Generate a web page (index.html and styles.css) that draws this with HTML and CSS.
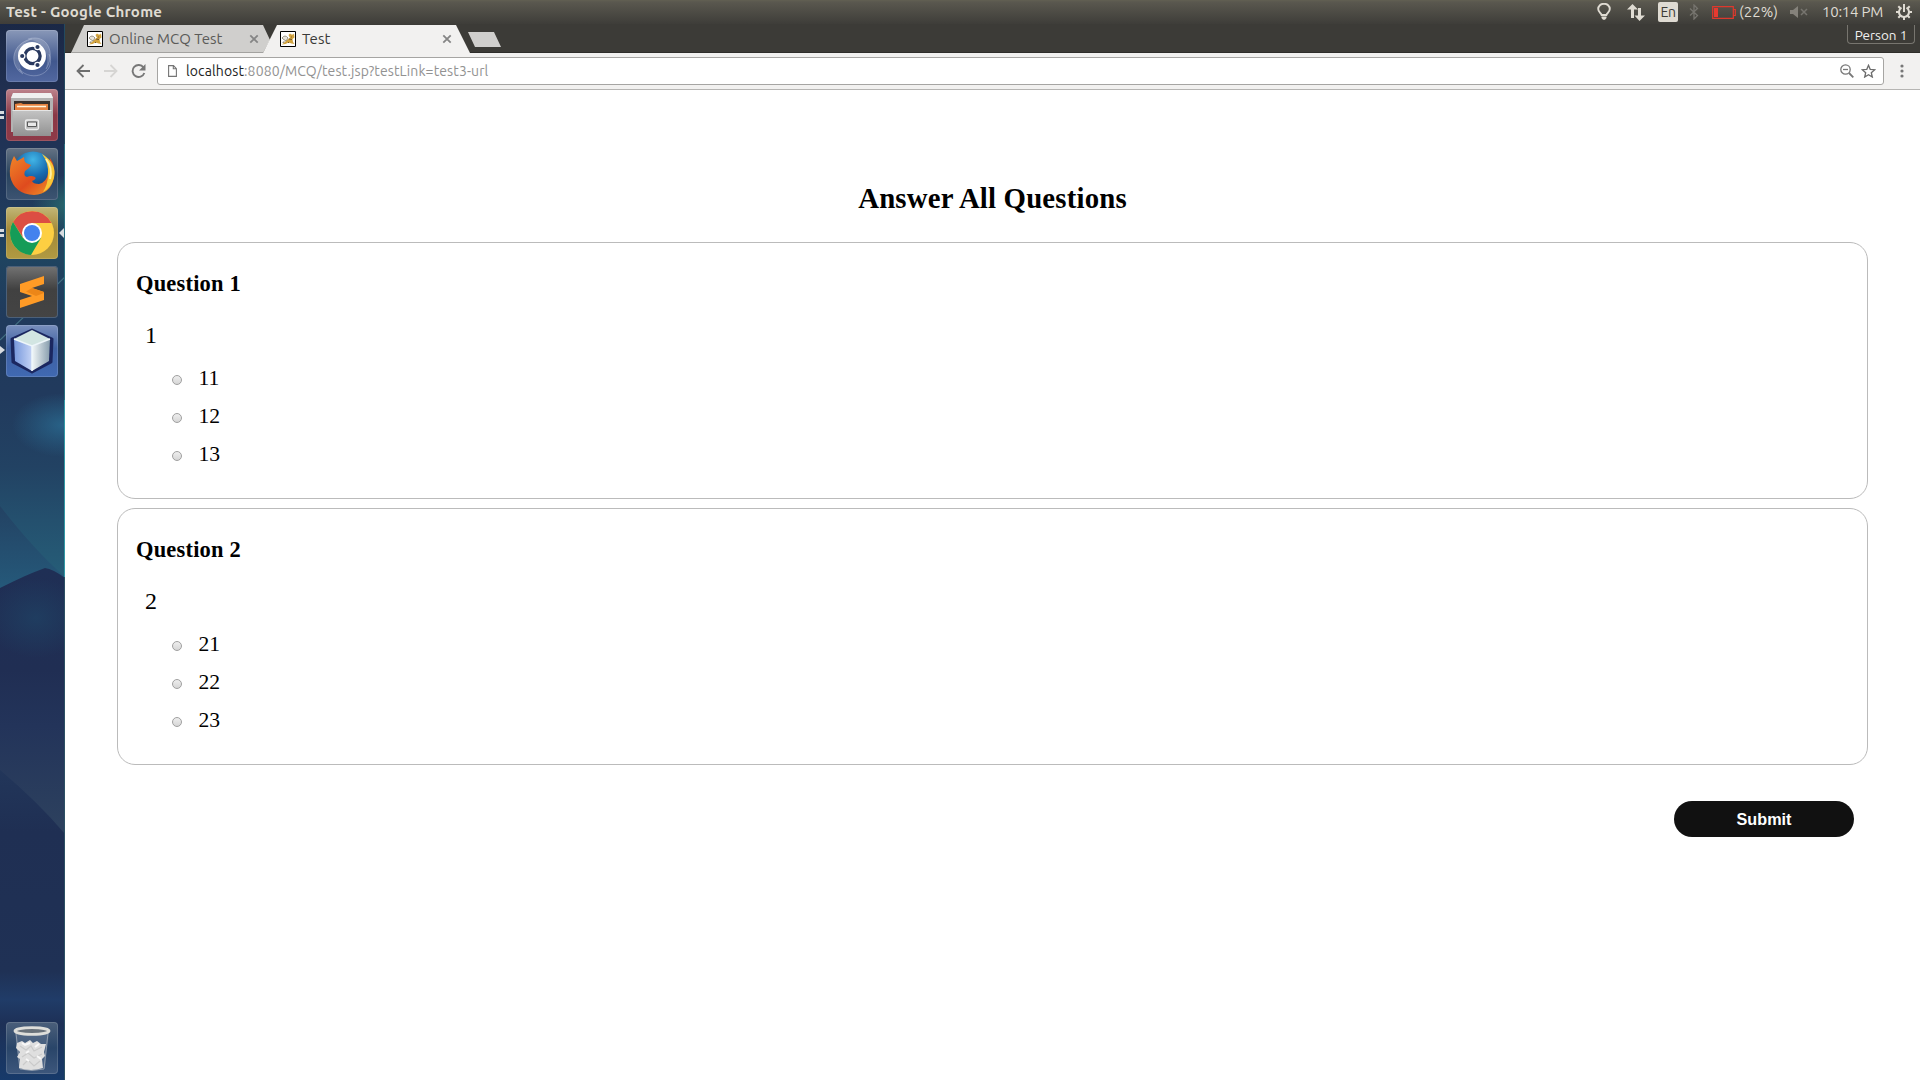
FILE: index.html
```html
<!DOCTYPE html>
<html lang="en">
<head>
<meta charset="utf-8">
<title>Test</title>
<link rel="stylesheet" href="styles.css">
</head>
<body>
<svg width="0" height="0" class="defs">
  <defs>
    <symbol id="cat" viewBox="0 0 16 16"><path d="M.5.500h15v15H.5z" fill="#fff" stroke="#000"/><path d="M2 13.500l4-3.500 2-2 2-1-1.500-3L10 2.500l1.500 1h1.500l1-1 .5 4-2 1.500.5 3 1.500 2-3-.5-3-1-3 1.500z" fill="#d2a33f"/><path d="M2 7q3-4 6 0L6 10 3 8zM4 10v1.500H2.500" fill="#e9e6dd" stroke="#77705f" stroke-width=".7"/><path d="M11 6h.8M9 8l3 .5M8 12l1-1" stroke="#654a21" stroke-width=".9"/></symbol>
    <symbol id="close" viewBox="0 0 10 10"><path d="M1.300 1.300l7.400 7.400M8.700 1.300L1.300 8.700" stroke="#858585" stroke-width="1.800"/></symbol>
  </defs>
</svg>
<header class="panel">
  <span class="window-title">Test - Google Chrome</span>
  <svg class="bulb" width="16" height="18" viewBox="0 0 16 18"><path d="M5.600 12C5 10 2.200 9 2.200 6a5.800 5.300 0 0 1 11.600 0c0 3-2.800 4-3.400 6z" fill="none" stroke="#dfdbd2" stroke-width="1.900"/><path d="M5.500 13.500h5V15l-1.500 1.700H7L5.500 15z" fill="#dfdbd2"/></svg>
  <svg class="arrows" width="18" height="17" viewBox="0 0 18 17"><path d="M5.500 0L11 5.500H7V14H4V5.500H0zM12.500 17L7.500 11.500H11V4h3v7.500h4z" fill="#dfdbd2"/></svg>
  <span class="lang">En</span>
  <svg class="bt" width="10" height="16" viewBox="0 0 10 16"><path d="M1 4.500l7.500 7L5 15V1l3.500 3.500L1 11.500" fill="none" stroke="#77756f" stroke-width="1.300"/></svg>
  <svg class="battery" width="24" height="13" viewBox="0 0 24 13"><path d="M.7.700h20.600v11.600H.7zM21.500 3.500h1.800v6h-1.800" fill="none" stroke="#df382c" stroke-width="1.200"/><path d="M2 2h4v9H2z" fill="#e63a30"/></svg>
  <span class="pct">(22%)</span>
  <svg class="mute" width="18" height="12" viewBox="0 0 18 12"><path d="M0 4h3l5-4v12L3 8H0z" fill="#85827b"/><path d="M11 3l6 6M17 3l-6 6" stroke="#77756f" stroke-width="1.500"/></svg>
  <span class="clock">10:14 PM</span>
  <svg class="gear" width="16" height="16" viewBox="0 0 16 16"><g fill="none" stroke="#dfdbd2"><path d="M5.500 3.700a5 5 0 1 0 5 0" stroke-width="2"/><path d="M8 0v8M0 8h3M13 8h3M8 13v3M2.300 2.300l2 2M13.700 2.300l-2 2M2.300 13.700l2-2M13.700 13.700l-2-2" stroke-width="2"/></g></svg>
</header>
<div class="desktop">
  <nav class="launcher">
    <svg class="wallpaper" width="65" height="1056" viewBox="0 24 65 1056" preserveAspectRatio="none">
      <defs>
        <linearGradient id="wp" x1="0" y1="24" x2="0" y2="1080" gradientUnits="userSpaceOnUse">
          <stop offset="0" stop-color="#1a2846"/><stop offset=".06" stop-color="#202f50"/><stop offset=".15" stop-color="#20365a"/><stop offset=".22" stop-color="#1f4460"/><stop offset=".28" stop-color="#203a5c"/><stop offset=".35" stop-color="#213a5d"/><stop offset=".42" stop-color="#224263"/><stop offset=".47" stop-color="#24506e"/><stop offset=".53" stop-color="#265f79"/>
        </linearGradient>
        <linearGradient id="hill" x1="0" y1="567" x2="0" y2="1080" gradientUnits="userSpaceOnUse">
          <stop offset="0" stop-color="#1f2f55"/><stop offset=".2" stop-color="#202e53"/><stop offset=".31" stop-color="#23345a"/><stop offset=".5" stop-color="#2c405e"/><stop offset="1" stop-color="#2c405e"/>
        </linearGradient>
        <linearGradient id="low" x1="0" y1="770" x2="0" y2="1080" gradientUnits="userSpaceOnUse">
          <stop offset="0" stop-color="#22365a"/><stop offset=".2" stop-color="#1f2f53"/><stop offset=".65" stop-color="#1f3155"/><stop offset=".74" stop-color="#203c68"/><stop offset=".82" stop-color="#1d3056"/><stop offset="1" stop-color="#173a6a"/>
        </linearGradient>
        <linearGradient id="left" x1="0" y1="506" x2="0" y2="588" gradientUnits="userSpaceOnUse"><stop offset="0" stop-color="#234263"/><stop offset="1" stop-color="#25597a"/></linearGradient>
        <radialGradient id="glow"><stop offset="0" stop-color="#2a6a90" stop-opacity=".8"/><stop offset="1" stop-color="#2a6a90" stop-opacity="0"/></radialGradient>
        <radialGradient id="glow2"><stop offset="0" stop-color="#1f4365" stop-opacity=".7"/><stop offset="1" stop-color="#1f4365" stop-opacity="0"/></radialGradient>
        <radialGradient id="glow3"><stop offset="0" stop-color="#2a7070" stop-opacity=".8"/><stop offset="1" stop-color="#2a7070" stop-opacity="0"/></radialGradient>
      </defs>
      <path d="M0 24h65v1056H0z" fill="url(#wp)"/>
      <ellipse cx="66" cy="205" rx="34" ry="30" fill="url(#glow3)"/>
      <ellipse cx="62" cy="425" rx="50" ry="32" fill="url(#glow)"/>
      <path d="M0 506Q35 551 65 577v20H0z" fill="url(#left)"/>
      <path d="M0 588Q30 573 45 568q8 1 20 10v502H0z" fill="url(#hill)"/>
      <ellipse cx="36" cy="618" rx="50" ry="40" fill="url(#glow2)"/>
      <path d="M0 770Q38 802 65 834v246H0z" fill="url(#low)"/>
      <path d="M0 340L65 277" stroke="#4b7d8c" stroke-width="1.200" opacity=".8"/>
      <path d="M64.500 24v120" stroke="#234a60"/><path d="M64.500 144v256" stroke="#287080"/><path d="M64.500 400v177" stroke="#319aa6"/><path d="M64.500 577v503" stroke="#2c5064"/>
    </svg>
    <div class="tile dash"><svg width="52" height="52" viewBox="0 0 52 52"><g fill="none" stroke="#c8d2e8" stroke-opacity=".35"><path d="M22 9C42 3 50 24 40 39M43 24C51 42 27 54 13 39M17 44C1 34 7 12 26 9"/></g><path d="M22 9C42 3 50 24 40 39C44 25 39 12 22 9M17 44C1 34 7 12 26 9C13 15 10 28 17 44" fill="#fff" opacity=".17"/><circle cx="26" cy="26" r="14" fill="#fff"/><circle cx="26.500" cy="26" r="7.600" fill="none" stroke="#29395f" stroke-width="3.300"/><g fill="#29395f" stroke="#fff" stroke-width="1.200"><circle cx="16.200" cy="26" r="2.700"/><circle cx="31.500" cy="17" r="2.700"/><circle cx="31.500" cy="35" r="2.700"/></g></svg></div>
    <div class="tile files"><i class="run two"></i><svg width="52" height="52" viewBox="0 0 52 52"><defs><linearGradient id="cab" x1="0" y1="0" x2="0" y2="1"><stop offset="0" stop-color="#c4c4c4"/><stop offset="1" stop-color="#929292"/></linearGradient></defs><path d="M7 4h38l2 5v34H5V9z" fill="#b3b3b3"/><path d="M7 4h38l2 5H5z" fill="#f0f0f0"/><path d="M8 12h36v11H8z" fill="#38302b"/><path d="M9 15l6-1 2 1h25v8H9z" fill="#e6823f"/><path d="M11 17.500h29" stroke="#fff4dc" stroke-width="1.500"/><path d="M7 21h38v26H7z" fill="url(#cab)"/><path d="M6.500 21.500h39" stroke="#e5e5e5"/><rect x="19.500" y="31" width="13" height="9.500" rx="1.500" fill="#b9b9b9" stroke="#ededed" stroke-width="1.300"/><path d="M21.500 33h9v4.500h-9z" fill="#e9e9e9" stroke="#585858"/></svg></div>
    <div class="tile firefox"><svg width="52" height="52" viewBox="0 0 52 52"><defs><radialGradient id="globe" cx=".5" cy=".2" r=".8"><stop offset="0" stop-color="#42b5e6"/><stop offset=".5" stop-color="#176aaf"/><stop offset="1" stop-color="#153467"/></radialGradient><linearGradient id="fox" x1="0" y1="0" x2="1" y2="1"><stop offset="0" stop-color="#f08428"/><stop offset=".55" stop-color="#df4b1e"/><stop offset="1" stop-color="#f09b2a"/></linearGradient></defs><circle cx="27" cy="24" r="20.500" fill="url(#globe)"/><path d="M8 8l3 5q4-2 7-4 0 4 2 6l5 2-2 3-4 3q-2 5 2 6 4-2 8 0 2 2-3 4 1 3 7 3 8-2 9-11l2-15q6 9 4 19-3 17-20 18Q8 46 4 28 3 17 8 8z" fill="url(#fox)"/><path d="M36 6q15 9 12 24-3 10-11 14 5-8 5-17 1-12-6-21z" fill="#f8c636"/><path d="M40 11q7 9 4 20" stroke="#fff0a4" stroke-width="2" fill="none"/></svg></div>
    <div class="tile chrome"><i class="run two"></i><i class="focus"></i><svg width="52" height="52" viewBox="0 0 52 52"><circle cx="26" cy="26" r="22" fill="#fdcf42"/><path d="M7 15A22 22 0 0 1 45.500 16H26L17.300 31z" fill="#dc4e43"/><path d="M7 15A22 22 0 0 0 25 48l10-17-9 4-9-4z" fill="#159c58"/><circle cx="26" cy="26" r="10" fill="#fff"/><circle cx="26" cy="26" r="8" fill="#4382ee"/></svg></div>
    <div class="tile sublime"><svg width="52" height="52" viewBox="0 0 52 52"><path d="M14 18l24-8v8l-12 4 12 4v8l-24 8v-8l12-4-12-4z" fill="#ff9b26"/><path d="M26 22l12 4v1l-8 3-10-4.500z" fill="#ec8618"/></svg></div>
    <div class="tile netbeans"><i class="run one"></i><svg width="52" height="52" viewBox="0 0 52 52"><defs><linearGradient id="nl"><stop offset="0" stop-color="#7798dc"/><stop offset="1" stop-color="#c4d3f5"/></linearGradient><linearGradient id="nr"><stop offset="0" stop-color="#f2f7f8"/><stop offset="1" stop-color="#879dad"/></linearGradient></defs><path d="M26 5l20 9-1 23-19 10L7 37 6 14z" fill="#1b2760" stroke="#1b2760" stroke-width="3" stroke-linejoin="round"/><path d="M8 14l18 7v25L9 36z" fill="url(#nl)"/><path d="M26 21l18-7-1 22-17 10z" fill="url(#nr)"/><path d="M26 5l18 9-18 7-18-7z" fill="#d2e5e2"/><path d="M8 14l18 7 18-7M26 21v25" fill="none" stroke="#eef6fa" stroke-width="1.500"/></svg></div>
    <div class="tile trash"><svg width="52" height="52" viewBox="0 0 52 52"><path d="M9 10h34l-4 36q-13 4-26 0z" fill="#8495ac" opacity=".3"/><path d="M10 11l4 36q12 3 24 0l4-36" fill="none" stroke="#8d9aab"/><path d="M11 21l5-2 3 2 5-3 3 3 4-2 4 3 5 0-2 8 1 4-3 3 1 9q-12 4-24 0l1-9-3-2 3-5-4-4z" fill="#dfdfdf"/><path d="M14 24l6 4 5-4 3 5 8-4M16 35l6-4 6 5 8-4M17 43l5-5 6 6 6-5" fill="none" stroke="#cacaca" stroke-width="1.200"/><path d="M16 21l3 2 5-2M29 25l4-3M20 37l3 2M31 34l4 3M20 31l3-2" stroke="#f8f8f8" stroke-width="2" fill="none"/><ellipse cx="26" cy="9" rx="17" ry="3.300" fill="#68717a" stroke="#dededa" stroke-width="2.800"/></svg></div>
  </nav>
  <section class="browser">
    <div class="tabstrip">
      <div class="tab inactive"><svg class="fav"><use href="#cat"/></svg><span>Online MCQ Test</span><svg class="x"><use href="#close"/></svg></div>
      <div class="tab active"><svg class="fav"><use href="#cat"/></svg><span>Test</span><svg class="x"><use href="#close"/></svg></div>
      <div class="newtab"></div>
      <div class="person"><span>Person 1</span></div>
    </div>
    <div class="toolbar">
      <svg class="back" width="14" height="14" viewBox="0 0 14 14"><path d="M14 7H2M7.500 1L1.500 7l6 6" fill="none" stroke="#6e6e6e" stroke-width="1.800"/></svg>
      <svg class="fwd" width="14" height="14" viewBox="0 0 14 14"><path d="M0 7h12M6.500 1l6 6-6 6" fill="none" stroke="#d6d5d3" stroke-width="1.800"/></svg>
      <svg class="reload" width="15" height="15" viewBox="0 0 15 15"><path d="M12.500 3.500A6 6 0 1 0 13.300 9" fill="none" stroke="#777" stroke-width="1.900"/><path d="M14.500 0v6.500H8z" fill="#777"/></svg>
      <div class="omnibox">
        <svg width="9" height="12" viewBox="0 0 9 12"><path d="M.6.600h4.900l2.900 3v7.800H.6zM5.300.600v3.200h3" fill="none" stroke="#757575" stroke-width="1.100"/></svg>
        <span class="url"><b>localhost</b>:8080/MCQ/test.jsp?testLink=test3-url</span>
        <svg class="mag" width="14" height="14" viewBox="0 0 14 14"><g fill="none" stroke="#777" stroke-width="1.300"><circle cx="5.500" cy="5.500" r="4.700"/><path d="M3 5.500h5"/><path d="M9 9l4.300 4.300" stroke-width="1.800"/></g></svg>
        <svg class="star" width="15" height="14" viewBox="0 0 15 14"><path d="M7.500 1.300l1.700 4 4.500.4-3.400 3 1 4.300-3.800-2.300L3.700 13l1-4.300-3.400-3 4.500-.4z" fill="none" stroke="#6c6c6c" stroke-width="1.300"/></svg>
      </div>
      <svg class="menu" width="4" height="14" viewBox="0 0 4 14"><g fill="#777"><circle cx="2" cy="2" r="1.600"/><circle cx="2" cy="7" r="1.600"/><circle cx="2" cy="12" r="1.600"/></g></svg>
    </div>
    <main class="page">
      <h2>Answer All Questions</h2>
      <article class="card">
        <h3>Question 1</h3>
        <p>1</p>
        <ul><li><i class="radio"></i>11</li><li><i class="radio"></i>12</li><li><i class="radio"></i>13</li></ul>
      </article>
      <article class="card">
        <h3>Question 2</h3>
        <p>2</p>
        <ul><li><i class="radio"></i>21</li><li><i class="radio"></i>22</li><li><i class="radio"></i>23</li></ul>
      </article>
      <button class="submit">Submit</button>
    </main>
  </section>
</div>
</body>
</html>
```
FILE: styles.css
```css
* { box-sizing: border-box; }
body { margin: 0; width: 1920px; height: 1080px; overflow: hidden; display: flex; flex-direction: column; background: #fff; font-family: Ubuntu, "Noto Sans", sans-serif; }
svg { display: block; flex: none; }
.defs { position: absolute; }

.panel { height: 24px; flex: none; display: flex; align-items: center; padding: 0 8px 0 6px; background: linear-gradient(#626052 0, #5a584f 2px, #3e3d39 100%); color: #dfdbd2; font-size: 15px; line-height: 24px; white-space: nowrap; }
.window-title { font-weight: 700; font-size: 15px; letter-spacing: .25px; margin-right: auto; }
.arrows { margin-left: 15px; }
.lang { margin-left: 13px; width: 20px; height: 20px; border-radius: 2px; background: #dfdbd2; color: #3c3b37; font-size: 14px; line-height: 20px; text-align: center; letter-spacing: -.5px; }
.bt { margin-left: 11px; }
.battery { margin-left: 13px; }
.pct { width: 39px; margin-left: 3px; font-size: 15px; }
.mute { margin-left: 12px; }
.clock { width: 61px; margin-left: 14px; margin-right: 1px; font-size: 15px; letter-spacing: -.25px; }
.gear { margin-left: 12px; }

.desktop { flex: 1; display: flex; min-height: 0; }
.launcher { position: relative; width: 65px; flex: none; display: flex; flex-direction: column; gap: 7px; padding: 6px 0 6px 6px; }
.wallpaper { position: absolute; left: 0; top: 0; }
.tile { position: relative; width: 52px; height: 52px; flex: none; border-radius: 4px; box-shadow: inset 0 0 0 1px rgba(255,255,255,.14); }
.dash { background: linear-gradient(#8998b8, #41588e 60%, #5268a0); }
.files { background: linear-gradient(#bd838c, #8a3846 50%, #8f3a48); }
.firefox { background: linear-gradient(#657384, #28435e 50%, #3d5472); }
.chrome { background: linear-gradient(#c2b777, #a28937 45%, #b19a42); }
.sublime { background: linear-gradient(#737373, #414141 45%, #444); box-shadow: inset 0 0 0 1px #4c6079; }
.netbeans { background: linear-gradient(#788fbd, #3e60a2 45%, #4069b2); }
.trash { margin-top: auto; background: linear-gradient(#4b5f7a, #294569 50%, #3d577c); }
.run, .focus { position: absolute; }
.run.two { left: -6px; top: 22px; width: 4px; height: 8px; border: solid #d8dce0; border-width: 3px 0; }
.run.one { left: -6px; top: 21px; border: solid transparent; border-width: 4px 0 4px 5px; border-left-color: #d8dce0; }
.focus { right: -6px; top: 21px; border: solid transparent; border-width: 5px 5px 5px 0; border-right-color: #d8dce0; }

.browser { flex: 1; display: flex; flex-direction: column; }
.tabstrip { height: 29px; flex: none; display: flex; align-items: flex-start; background: #3c3b37; padding: 1px 5px 0 6px; box-shadow: inset 0 -1px #2e2d2a; }
.tab { height: 28px; display: flex; align-items: center; padding-left: 16px; padding-bottom: 1px; font-size: 15px; line-height: 26px; white-space: nowrap; }
.tab span { flex: 1; margin-left: 6px; }
.fav { width: 16px; height: 16px; }
.x { width: 10px; height: 10px; }
.inactive { width: 201px; background: #d0cfcd; color: #5b5b59; padding-right: 13px; box-shadow: inset 0 -1px #a3a2a0; clip-path: polygon(0 100%, 13px 0, 192px 0, 199px 15px, 192px 100%); }
.active { width: 207px; margin-left: -9px; padding-left: 17px; padding-right: 18px; background: #f2f1f0; color: #3a3a38; clip-path: polygon(0 100%, 14px 0, 193px 0, 100% 100%); }
.newtab { width: 33px; height: 15px; margin: 7px auto 0 -2px; background: #d0cfcd; clip-path: polygon(0 0, 26px 0, 100% 100%, 7px 100%); }
.person { width: 68px; height: 19px; border: 1px solid #77756f; border-top: 0; border-radius: 0 0 4px 4px; color: #f2f1f0; font-size: 13.500px; line-height: 20px; text-align: center; white-space: nowrap; }
.toolbar { height: 37px; flex: none; display: flex; align-items: center; padding: 0 16px 0 11px; background: #f2f1f0; border-bottom: 1px solid #b6b5b3; }
.fwd { margin-left: 14px; }
.reload { margin-left: 13px; }
.omnibox { flex: 1; height: 28px; margin-left: 11px; border: 1px solid #a6a5a3; border-radius: 3px; background: #fff; display: flex; align-items: center; padding: 0 7px 0 10px; }
.url { flex: 1; margin-left: 9px; font-size: 14px; letter-spacing: .12px; line-height: 26px; color: #929292; white-space: nowrap; }
.url b { font-weight: 400; color: #222; }
.star { margin-left: 7px; }
.menu { margin-left: 16px; }

.page { flex: 1; padding: 92px 52px 0; font-family: "Liberation Serif", serif; color: #000; display: flex; flex-direction: column; }
.page h2 { margin: 0 0 28px; font-size: 28.800px; letter-spacing: .18px; line-height: 32px; text-align: center; }
.card { height: 257px; margin-bottom: 9px; border: 1px solid #bbb; border-radius: 18px; padding: 28px 18px 0; }
.card h3 { margin: 0; font-size: 22.460px; letter-spacing: .2px; line-height: 26px; }
.card p { margin: 24px 0 0 9px; font-size: 24px; line-height: 28px; }
.card ul { list-style: none; margin: 10px 0 0 36px; padding: 0; }
.card li { display: flex; align-items: center; height: 38px; font-size: 21.600px; line-height: 38px; }
.radio { width: 10px; height: 10px; margin: 4px 16.400px 0 0; border: 1px solid #a0a0a0; border-radius: 50%; background: linear-gradient(#eee, #d6d6d6); }
.submit { align-self: flex-end; width: 180px; height: 36px; margin: 27px 14px 0 0; padding: 0; border: 0; border-radius: 18px; background: #111; color: #fff; font: bold 16.200px/36px "Liberation Sans", sans-serif; }
```
